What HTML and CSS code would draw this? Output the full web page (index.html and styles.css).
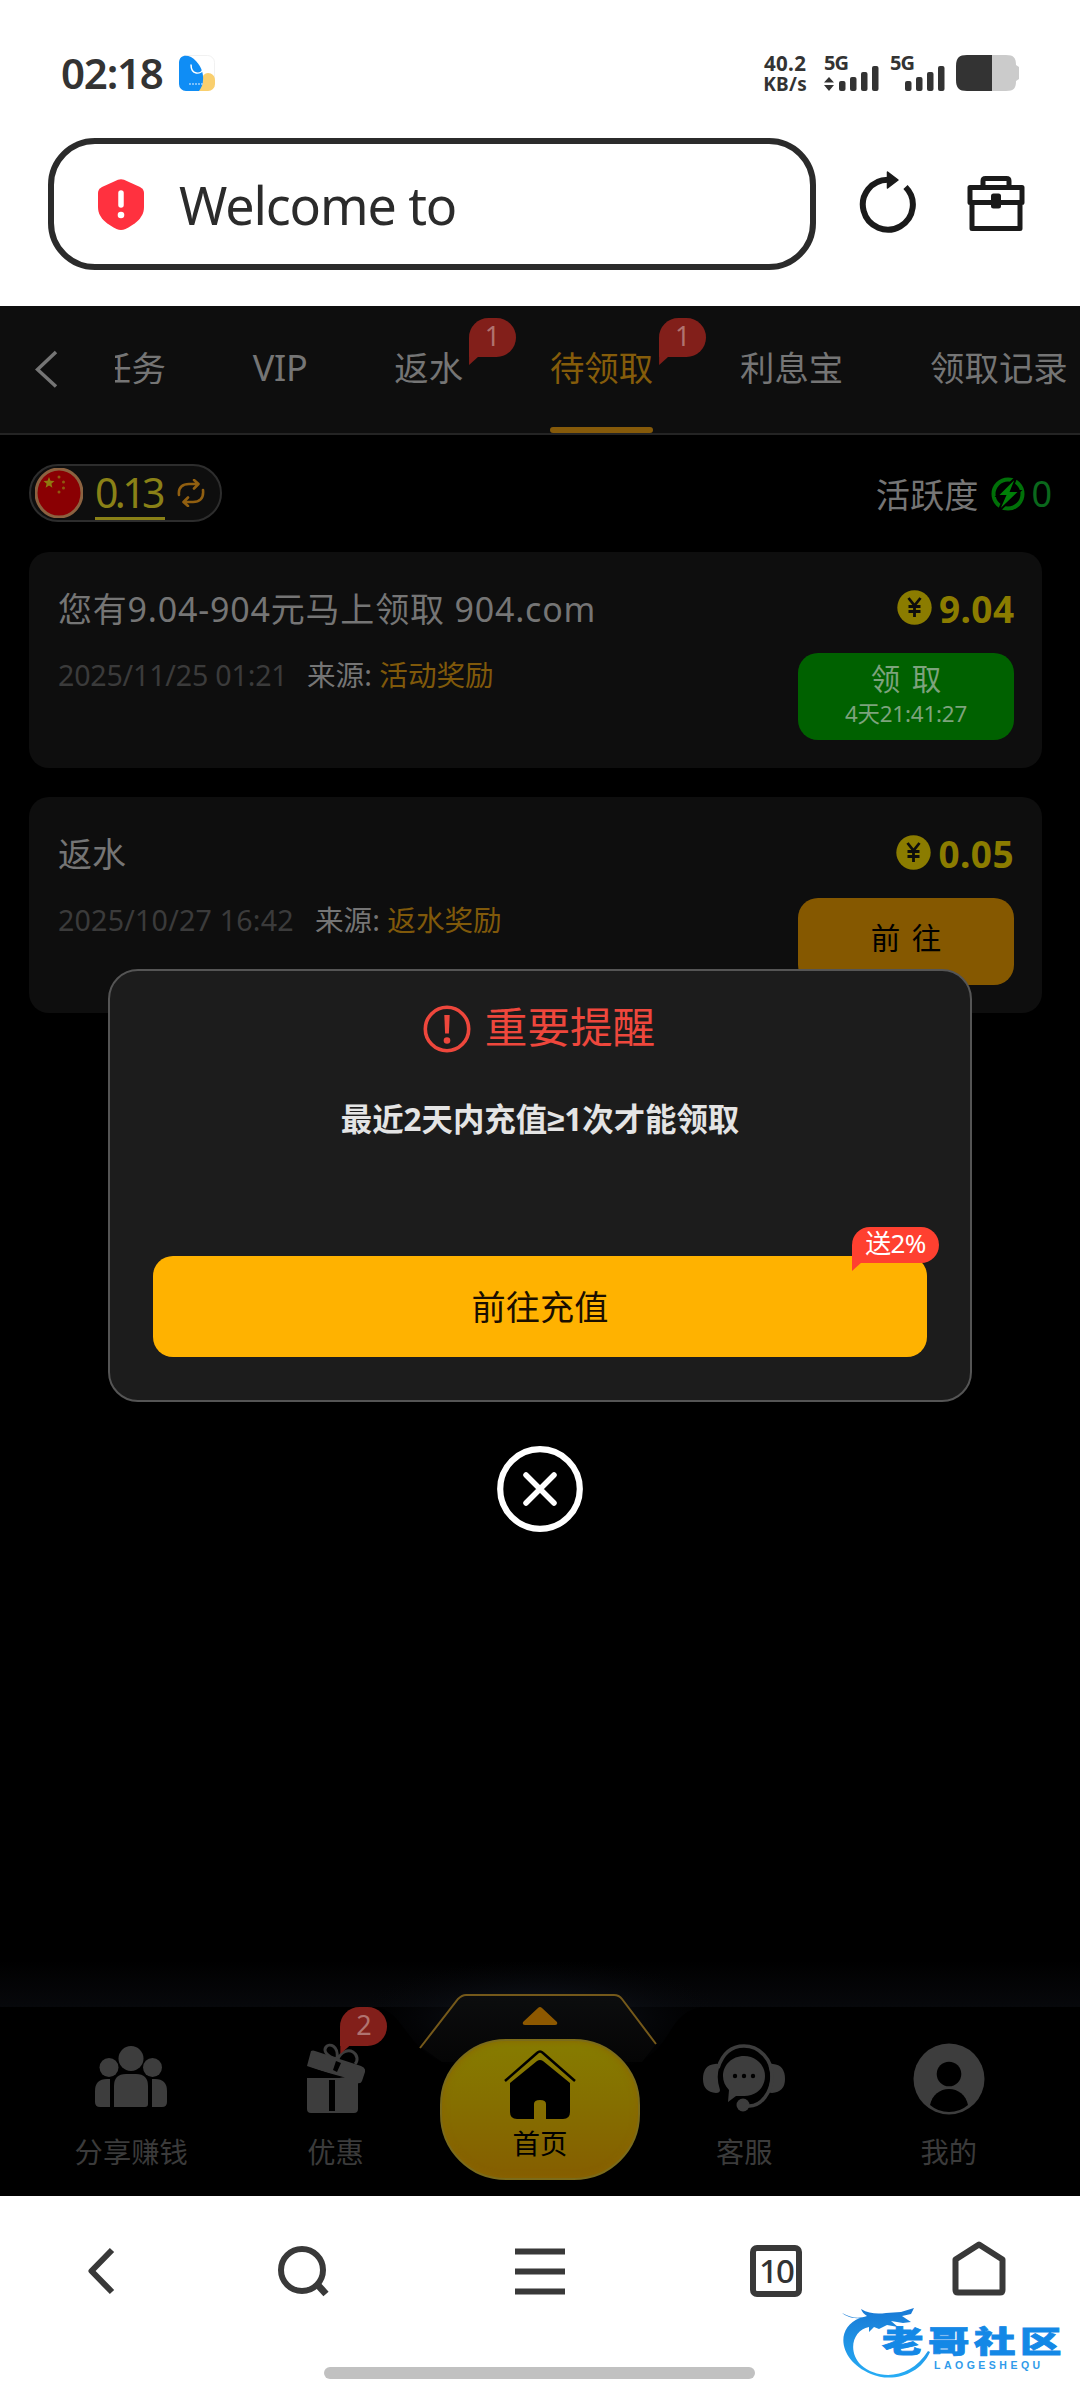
FILE: index.html
```html
<!DOCTYPE html>
<html lang="zh-CN">
<head>
<meta charset="utf-8">
<title>待领取</title>
<link rel="stylesheet" href="styles.css">
</head>
<body>
<div class="screen">
  <header class="status">
    <span class="clock">02:18</span>
    <svg class="app-icon" width="36" height="36" viewBox="0 0 36 36">
      <rect x=".5" y=".5" width="35" height="35" rx="7" fill="#fff" stroke="#f1f1f1"/>
      <path d="M20 36C22 28 22 18 29 18c4 0 7 3 7 7v4a7 7 0 0 1-7 7z" fill="#f9cf6e"/>
      <path d="M7 36a7 7 0 0 1-7-7V8C0 1 6-1 12 2C20 7 25 16 24 25c0 5-2 8-4 11z" fill="#0f8df5"/>
      <path d="M12 9.500c0 11 10 10 12 5" fill="none" stroke="#fff" stroke-width="1.500"/>
      <path d="M10 29h14" stroke="#9fd0fb" stroke-width="1.500" stroke-dasharray="2 1"/>
    </svg>
    <div class="net"><span>40.2</span><span>KB/s</span></div>
    <div class="signal">
      <span>5G</span>
      <svg width="55" height="26" viewBox="0 0 55 26" fill="#333">
        <path d="M0 17.500 5 12l5 5.500zM0 20h10l-5 6z"/>
        <rect x="15" y="16" width="6.500" height="10" rx="2"/><rect x="26" y="12" width="6.500" height="14" rx="2"/><rect x="37" y="7" width="6.500" height="19" rx="2"/><rect x="48" y="1" width="6.500" height="25" rx="2"/>
      </svg>
    </div>
    <div class="signal">
      <span>5G</span>
      <svg width="55" height="26" viewBox="0 0 55 26" fill="#333">
        <rect x="15" y="16" width="6.500" height="10" rx="2"/><rect x="26" y="12" width="6.500" height="14" rx="2"/><rect x="37" y="7" width="6.500" height="19" rx="2"/><rect x="48" y="1" width="6.500" height="25" rx="2"/>
      </svg>
    </div>
    <svg class="battery" width="64" height="36" viewBox="0 0 64 36">
      <path d="M36 0h14c8 0 10 3 10 10l3 2v12l-3 2c0 7-2 10-10 10H36z" fill="#cbcbcb"/>
      <path d="M36 0H11C3 0 0 3 0 11v14c0 8 3 11 11 11h25z" fill="#333"/>
    </svg>
  </header>

  <div class="address-row">
    <div class="address">
      <svg width="46" height="51" viewBox="0 0 46 51">
        <path d="M20 .800q3-1.200 6 0L42 8q4 2 4 6v14c0 12-11 18-18.500 22q-4.500 2-9 0C11 46 0 40 0 28V14q0-4 4-6z" fill="#ff313f"/>
        <path d="M23 14v12" stroke="#fff" stroke-width="5.500" stroke-linecap="round"/><circle cx="23" cy="36" r="3.300" fill="#fff"/>
      </svg>
      <span>Welcome to</span>
    </div>
    <svg class="reload" width="58" height="64" viewBox="0 0 58 64">
      <path d="M46.500 17A25 25 0 1 1 29 9.700" fill="none" stroke="#1a1a1a" stroke-width="6"/>
      <path d="M28.500 2 39 10 28.500 18z" fill="#1a1a1a" stroke="#1a1a1a" stroke-width="1.500" stroke-linejoin="round"/>
    </svg>
    <svg class="case" width="58" height="58" viewBox="0 0 58 58" fill="none" stroke="#1a1a1a" stroke-width="5" stroke-linejoin="round">
      <path d="M16 11V6q0-2.500 2.500-2.500h21Q42 3.500 42 6v5M3 12.500h52v15H3zM5 27v26.500h48V27"/>
      <rect x="26.500" y="21" width="5" height="10" fill="#1a1a1a"/>
    </svg>
  </div>

  <main class="page">
    <nav class="tabs">
      <svg class="back" width="24" height="38" viewBox="0 0 24 38" fill="none" stroke="#757575" stroke-width="3.500"><path d="M21 2 2.500 19.500 21 36.500"/></svg>
      <div class="strip">
        <span class="tab">任务</span>
        <span class="tab vip">VIP</span>
        <span class="tab">返水<b class="badge">1</b></span>
        <span class="tab active">待领取<b class="badge">1</b></span>
        <span class="tab">利息宝</span>
        <span class="tab">领取记录</span>
      </div>
    </nav>

    <section class="summary">
      <div class="balance">
        <svg width="48" height="50" viewBox="0 0 48 50">
          <ellipse cx="24" cy="25" rx="23" ry="24" fill="#8a0003" stroke="#8c6240" stroke-width="3"/>
          <path d="m14 9 1.500 3.800 4 .300-3.100 2.600 1 4L14 17.600l-3.400 2.100 1-4-3.100-2.600 4-.300z" fill="#8f7a10"/>
          <g fill="#8f5a10"><circle cx="24" cy="9" r="1.500"/><circle cx="28.500" cy="14" r="1.500"/><circle cx="28.500" cy="20" r="1.500"/><circle cx="24" cy="24" r="1.500"/></g>
        </svg>
        <span class="amount">0.13</span>
        <svg width="28" height="28" viewBox="0 0 28 28" fill="none" stroke="#915f10" stroke-width="2.600" stroke-linecap="round" stroke-linejoin="round">
          <path d="M2 16C1 8 6 5 12 5h9M17 1l4.500 4-4.500 4.500M26 11c1 9-4 12-10 12H7M11 18.500 6.500 23l4.500 4"/>
        </svg>
      </div>
      <div class="activity">
        <span>活跃度</span>
        <svg width="34" height="36" viewBox="0 0 34 36">
          <circle cx="17" cy="18" r="14.500" fill="none" stroke="#007008" stroke-width="4"/>
          <path d="M26 0 6 20h8L7 36 29 15h-9z" fill="#008008" stroke="#000" stroke-width="2"/>
        </svg>
        <span class="zero">0</span>
      </div>
    </section>

    <section class="rewards">
      <article class="card">
        <div class="info">
          <h2 class="long">您有9.04-904元马上领取 904.com</h2>
          <p><time class="first">2025/11/25 01:21</time><span>来源: </span><em>活动奖励</em></p>
        </div>
        <div class="side">
          <div class="prize">
            <svg width="35" height="35" viewBox="0 0 35 35"><circle cx="17.500" cy="17.500" r="17.200" fill="#8b7c00"/><path d="m11.500 8 6 7.500 6-7.500M17.500 15v12M11.500 16.500h12M11.500 21.500h12" fill="none" stroke="#0d0d0d" stroke-width="2.800"/></svg>
            <strong>9.04</strong>
          </div>
          <button class="claim"><span class="wide">领 取</span><small>4天21:41:27</small></button>
        </div>
      </article>
      <article class="card">
        <div class="info">
          <h2>返水</h2>
          <p><time>2025/10/27 16:42</time><span>来源: </span><em>返水奖励</em></p>
        </div>
        <div class="side">
          <div class="prize">
            <svg width="35" height="35" viewBox="0 0 35 35"><circle cx="17.500" cy="17.500" r="17.200" fill="#8b7c00"/><path d="m11.500 8 6 7.500 6-7.500M17.500 15v12M11.500 16.500h12M11.500 21.500h12" fill="none" stroke="#0d0d0d" stroke-width="2.800"/></svg>
            <strong class="low">0.05</strong>
          </div>
          <button class="goto"><span class="wide">前 往</span></button>
        </div>
      </article>
    </section>

    <footer class="dock">
      <svg class="dock-art" width="1080" height="236" viewBox="0 0 1080 236">
        <defs>
          <linearGradient id="haze" x1="0" y1="0" x2="0" y2="1"><stop offset="0" stop-color="#000"/><stop offset="1" stop-color="#07080b"/></linearGradient>
          <radialGradient id="glow"><stop offset="0" stop-color="#141a26"/><stop offset="1" stop-color="#07080b" stop-opacity="0"/></radialGradient>
          <linearGradient id="hood" x1="0" y1="0" x2="0" y2="1"><stop offset="0" stop-color="#0c0d0e"/><stop offset="1" stop-color="#050505"/></linearGradient>
        </defs>
        <rect width="1080" height="47" fill="url(#haze)"/>
        <ellipse cx="540" cy="58" rx="185" ry="58" fill="url(#glow)"/>
        <path d="M0 47h370c36 0 32 42 78 58h184c46-16 32-58 78-58h370v189H0z" fill="#000"/>
        <path d="M421 87 456 41q4-6 10-6h148q6 0 10 6l32 43-14 18H442z" fill="url(#hood)"/>
        <path d="M420 88 458 39q4-4 8-4h148q5 0 8 4l34 45" fill="none" stroke="#75591a" stroke-width="2"/>
        <path d="M538 48q2-2 4 0l15 14q1 3-2 3h-30q-3 0-2-3z" fill="#8d5800"/>
      </svg>
      <a class="item">
        <svg width="72" height="62" viewBox="0 0 72 62" fill="#3d3d3d">
          <circle cx="36" cy="12.500" r="12.500"/><circle cx="14" cy="21.500" r="9.500"/><circle cx="57.500" cy="21.500" r="9.500"/>
          <path d="M19 61V40q0-12 12-12h10q12 0 12 12v18q0 3-3 3zM15 61H5q-5 0-5-5V45q0-12 12-12h3zM57 61V33h3q12 0 12 12v11q0 5-5 5z"/>
        </svg>
        <span>分享赚钱</span>
      </a>
      <a class="item">
        <svg width="58" height="70" viewBox="0 0 58 70">
          <g fill="none" stroke="#3d3d3d" stroke-width="3"><path d="M30 16C20 14 16 8 19 4s13-2 11 12zM31 16c3-7 10-10 15-7s5 9 2 12"/></g>
          <path d="M0 35h51v31q0 4-4 4H4q-4 0-4-4zM4 8q2-1 4 0l46 15q5 2 4 6l-3 9q-1 3-5 2L0 23z" fill="#3d3d3d"/>
          <path d="M22 37h6v31h-6zM29 18l5 2-4 9-4-2z" fill="#000"/>
          <path d="M0 24 38 34.500H0z" fill="#000"/>
        </svg>
        <span>优惠</span>
        <b class="badge">2</b>
      </a>
      <a class="home">
        <svg width="72" height="72" viewBox="0 0 72 72">
          <path d="M1 32 33 4q3-3 6 0l32 28" fill="none" stroke="#000" stroke-width="2.500"/>
          <path d="M6 34 33 12q3-2 6 0l27 22v29q0 7-7 7H42V55q0-4-6-4t-6 4v15H13q-7 0-7-7z"/>
        </svg>
        <span>首页</span>
      </a>
      <a class="item">
        <svg width="82" height="68" viewBox="0 0 82 68">
          <path d="M12 20q5-1 4 4-3 10 1 22 0 3-4 3Q0 48 0 35 0 21 12 20zM70 20q-5-1-4 4 3 10-1 22 0 3 4 3 13-1 13-14 0-14-12-15z" fill="#3d3d3d"/>
          <path d="M15 24C20 8 30 2 41 2c16 0 28 14 28 30S58 63 45 62" fill="none" stroke="#3d3d3d" stroke-width="3.500"/>
          <circle cx="40" cy="61" r="6.500" fill="#3d3d3d"/>
          <path d="M41 12c12 0 21 9 21 20S54 52 41 52h-8l-8 6 1-12c-4-4-6-9-6-14 0-11 9-20 21-20z" fill="#3d3d3d"/>
          <g fill="#000"><circle cx="32" cy="32" r="2.200"/><circle cx="41" cy="32" r="2.200"/><circle cx="50" cy="32" r="2.200"/></g>
        </svg>
        <span>客服</span>
      </a>
      <a class="item">
        <svg width="72" height="72" viewBox="0 0 72 72">
          <circle cx="36" cy="36" r="35.500" fill="#3d3d3d"/><circle cx="36" cy="31" r="12.300"/>
          <path d="M17 62C19 52 27 46 36 46s17 6 19 16q-8 7-19 7t-19-7z"/>
        </svg>
        <span>我的</span>
      </a>
    </footer>

    <div class="overlay">
      <section class="modal">
        <h1>
          <svg width="48" height="48" viewBox="0 0 48 48"><circle cx="24" cy="24" r="21.700" fill="none" stroke="#ee473c" stroke-width="3.600"/><path d="M21.300 10h5.400l-.800 18.500h-3.800z" fill="#ee473c"/><circle cx="24" cy="35.500" r="3.300" fill="#ee473c"/></svg>
          <span>重要提醒</span>
        </h1>
        <p>最近2天内充值<span class="sign">≥</span>1次才能领取</p>
        <button class="deposit">前往充值<b class="bonus">送2%</b></button>
      </section>
      <svg class="close" width="86" height="86" viewBox="0 0 86 86" fill="none" stroke="#fff"><circle cx="43" cy="43" r="39.800" stroke-width="6.200"/><path d="m29 29 28 28M57 29 29 57" stroke-width="5.500" stroke-linecap="round"/></svg>
    </div>
  </main>

  <footer class="browser">
    <svg width="1080" height="64" viewBox="0 0 1080 64" class="browser-icons" fill="none" stroke="#393939" stroke-width="6">
      <path d="M112 13 91.500 34 112 55" stroke-linejoin="round"/>
      <ellipse cx="302" cy="33" rx="21" ry="21"/><path d="m316 46 10 11" stroke-width="7"/>
      <path d="M515 14.500h50M515 34.500h50M515 54.500h50"/>
      <path d="M955.500 22.500 979 7.500l23.500 15V53q0 2.500-2.500 2.500h-42q-2.500 0-2.500-2.500z" stroke-linejoin="round"/>
    </svg>
    <div class="tab-count">10</div>
    <div class="handle"></div>
    <div class="watermark">
      <svg width="92" height="76" viewBox="0 0 92 76">
        <defs><linearGradient id="wm" x1="0" y1="0" x2="0" y2="1"><stop offset="0" stop-color="#1879d5"/><stop offset="1" stop-color="#27adf5"/></linearGradient></defs>
        <path d="M0 8c9 5 17 6 25 3-3-2-5-4-6-7 8 5 17 5 25 4l15-1 13-4-3 6-9 2 9 6-8 1-12-2 7 6-11-2-8 4-5-2-5 5v-5C11 25 5 46 19 60c17 15 49 15 67-14l2 1C78 70 50 78 29 69-3 56-8 23 18 13 10 14 4 11 0 8z" fill="url(#wm)"/>
      </svg>
      <div class="brand"><span>老哥社区</span><small>LAOGESHEQU</small></div>
    </div>
  </footer>
</div>
</body>
</html>
```

FILE: styles.css
```css
* { box-sizing: border-box; }
body { margin: 0; background: #fff; font-family: "Noto Sans", "Noto Sans CJK SC", sans-serif; }
svg { display: block; flex: none; }
h1, h2, p { margin: 0; font-weight: 400; }
button { border: 0; padding: 0; font-family: inherit; }
em { font-style: normal; }
.screen { width: 1080px; height: 2400px; display: flex; flex-direction: column; overflow: hidden; position: relative; }

/* status bar */
.status { height: 138px; padding: 55px 60px 0 61px; display: flex; align-items: flex-start; color: #333; }
.clock { font-size: 42px; line-height: 36px; font-weight: 600; width: 119px; letter-spacing: -1.2px; }
.net { margin-left: 547px; width: 46px; display: flex; flex-direction: column; align-items: center; font-weight: 700; font-size: 20.5px; line-height: 17px; letter-spacing: .3px; }
.net span:last-child { font-size: 19px; line-height: 24px; }
.signal { width: 55px; height: 37px; margin-left: 16px; position: relative; display: flex; align-items: flex-end; }
.signal + .signal { margin-left: 11px; }
.signal span { position: absolute; left: 0; top: 0; font-size: 20px; line-height: 15px; font-weight: 700; letter-spacing: -1px; }
.signal svg { margin-bottom: 1px; }
.battery { margin-left: 11px; }

/* address bar */
.address-row { height: 168px; padding-left: 48px; display: flex; align-items: flex-start; flex: none; }
.address { width: 768px; height: 132px; border: 6px solid #2b2b2b; border-radius: 47px; display: flex; align-items: center; padding-left: 44px; gap: 36px; font-size: 52px; letter-spacing: -1.1px; color: #2b2b2b; }
.address span { margin-left: -1px; padding-top: 2px; line-height: 60px; }
.reload { margin: 32px 0 0 43px; }
.case { margin: 37px 0 0 50px; }

/* web page */
.page { height: 1890px; flex: none; background: #000; position: relative; color: #757575; display: flex; flex-direction: column; }
.tabs { height: 129px; background: #0e0e0e; border-bottom: 2px solid #242424; display: flex; flex: none; font-size: 34.4px; }
.back { margin: 44px 0 0 35px; }
.strip { margin-left: 56px; flex: 1; height: 127px; overflow: hidden; display: flex; gap: 86.9px; }
.tab { flex: none; position: relative; height: 127px; line-height: 123px; white-space: nowrap; }
.tab:first-child { margin-left: -18px; }
.vip { font-size: 36px; letter-spacing: -.3px; }
.active { color: #855c0a; }
.active::after { content: ""; position: absolute; left: 0; right: 0; bottom: 0; height: 6px; border-radius: 3px; background: #855a0a; }
.badge { position: absolute; left: 100%; margin-left: 6px; top: 12px; width: 47px; height: 39px; border-radius: 20px 20px 20px 0; background: #821f1a; color: #b07370; font-size: 27px; line-height: 36px; font-weight: 400; text-align: center; }
.badge::after, .bonus::after { content: ""; position: absolute; left: 0; top: 100%; margin-top: -1px; width: 10px; height: 9px; background: inherit; clip-path: polygon(0 0, 100% 0, 0 100%); }

.summary { height: 117px; padding: 29px 28px 0 29px; display: flex; justify-content: space-between; align-items: flex-start; flex: none; }
.balance { width: 193px; height: 58px; border: 2px solid #2d2d2d; border-radius: 29px; background: #0e0e0e; display: flex; align-items: center; padding-left: 4px; }
.amount { margin: 0 12px; width: 70px; height: 53px; border-bottom: 3px solid #8a8117; color: #8a8117; font-size: 41px; line-height: 51px; letter-spacing: -3.6px; }
.activity { height: 58px; display: flex; align-items: center; font-size: 34.2px; }
.activity svg { margin: 2px 6px 0 13px; }
.zero { color: #0a681c; font-size: 36px; }

.rewards { padding-left: 29px; display: flex; flex-direction: column; gap: 29px; }
.card { width: 1013px; height: 216px; background: #0e0e0e; border-radius: 20px; padding: 34px 28px 0 29px; display: flex; justify-content: space-between; }
.info { padding-top: 2px; }
.card h2 { font-size: 34px; line-height: 42px; white-space: pre; }
.card h2.long { letter-spacing: .8px; }
.card p { margin-top: 24px; font-size: 28.6px; line-height: 42px; white-space: pre; }
.card time { color: #3b3b3b; display: inline-block; width: 257px; letter-spacing: .2px; }
.card time.first { width: 249px; letter-spacing: -.2px; }
.card em { color: #80590a; }
.side { width: 216px; }
.prize { height: 63px; margin-top: 4px; display: flex; justify-content: flex-end; align-items: flex-start; gap: 7px; }
.prize strong { font-size: 37px; line-height: 37px; width: 75px; letter-spacing: .4px; color: #8b7c00; text-align: right; }
.prize .low { width: 76px; }
.side button { width: 216px; height: 87px; border-radius: 20px; display: flex; flex-direction: column; align-items: center; justify-content: center; }
.claim { background: #006100; color: #7da37d; }
.goto { background: #855800; color: #000; }
.wide { font-size: 29.5px; line-height: 38px; word-spacing: 4px; }
.claim .wide { margin-top: -3px; }
.goto .wide { padding-bottom: 8px; }
.claim small { font-size: 22.4px; line-height: 32px; letter-spacing: -.2px; }

/* bottom dock */
.dock { margin-top: auto; height: 189px; padding: 0 29px; position: relative; display: flex; }
.dock-art { position: absolute; left: 0; bottom: 0; }
.item { width: 204.4px; position: relative; display: flex; flex-direction: column; align-items: center; justify-content: flex-end; padding-bottom: 24px; color: #3b3b3b; font-size: 28.3px; line-height: 40px; }
.item svg { margin-bottom: 24px; }
.item:nth-of-type(2) svg { margin-bottom: 19px; }
.item:nth-of-type(4) svg { margin-bottom: 20px; }
.item:nth-of-type(5) svg { margin-bottom: 17px; }
.item .badge { left: 107px; margin: 0; top: 0; }
.home { position: relative; width: 200px; height: 141px; margin: 32px 2.2px 0; border-radius: 66px; background: linear-gradient(#867c00, #856f00 45%, #855e00); border: 2px solid #7b6b1a; box-shadow: inset 0 0 7px #8b6500; display: flex; flex-direction: column; align-items: center; padding-top: 8px; color: #000; font-size: 27.5px; line-height: 40px; }
.home span { margin-top: 3px; }

/* dialog */
.overlay { position: absolute; inset: 0; padding-top: 663px; display: flex; flex-direction: column; align-items: center; }
.modal { width: 864px; height: 433px; border: 2px solid #555; border-radius: 30px; background: #1c1c1c; padding: 33px 44px 0; display: flex; flex-direction: column; align-items: center; }
.modal h1 { display: flex; align-items: center; gap: 14px; font-size: 42.6px; line-height: 50px; color: #ee473c; height: 50px; margin-right: 2px; }
.modal h1 span { margin-top: -6px; }
.modal p { margin-top: 43px; font-size: 31.4px; line-height: 44px; font-weight: 700; color: #e4e4e4; white-space: nowrap; height: 44px; }
.sign { font-family: "Liberation Sans", sans-serif; }
.deposit { position: relative; width: 774px; height: 101px; margin-top: 115px; border-radius: 20px; background: #ffb200; color: #1a0e00; font-size: 34.2px; line-height: 100px; }
.bonus { position: absolute; left: 699px; top: -29px; width: 87px; height: 36px; border-radius: 18px 18px 18px 0; background: #ff4030; color: #fff; font-size: 26px; line-height: 32px; font-weight: 400; letter-spacing: -.6px; }
.close { margin-top: 44px; }

/* browser toolbar */
.browser { height: 204px; flex: none; position: relative; padding-top: 41px; }
.tab-count { position: absolute; left: 750px; top: 49px; width: 52px; height: 52px; border: 6px solid #393939; border-radius: 7px; font-size: 33px; line-height: 39px; letter-spacing: -2px; text-align: center; color: #333; font-weight: 500; }
.handle { width: 431px; height: 12px; margin: 66px 0 0 324px; border-radius: 6px; background: #c1c1c1; }
.watermark { position: absolute; left: 842px; top: 109px; display: flex; }
.brand { margin-left: -52px; padding-top: 18px; display: flex; flex-direction: column; width: 182px; }
.brand span { font-size: 36px; line-height: 36px; font-weight: 900; letter-spacing: 4px; white-space: nowrap; color: #1488e6; -webkit-text-stroke: 1px #1488e6; transform: scale(1.15, .82); transform-origin: left center; width: 160px; }
.brand small { margin-left: 52px; font: 700 10.5px/12px "Liberation Sans", sans-serif; letter-spacing: 3.5px; color: #2f9bea; }
```
